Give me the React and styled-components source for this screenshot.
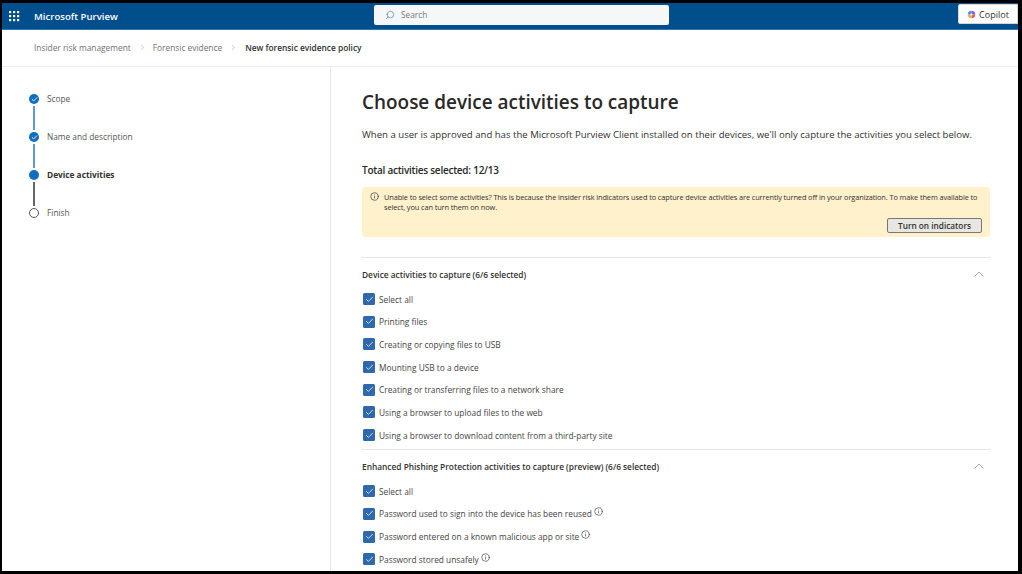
import React from "react";
import styled, { createGlobalStyle } from "styled-components";
import { Check, ChevronRight, ChevronUp, Info, Search } from "lucide-react";

const GlobalStyle = createGlobalStyle`
  html, body { margin: 0; padding: 0; height: 100%; background: #000; overflow: hidden; }
  body { font-family: "Open Sans", "Noto Sans", "Liberation Sans", sans-serif; color: #323130; }
  * { box-sizing: border-box; }
`;

const Frame = styled.div`
  width: 1022px;
  height: 574px;
  padding: 3px 4px 3px 2px;
  background: #000;
`;

const Screen = styled.div`
  height: 100%;
  background: #fff;
  display: flex;
  flex-direction: column;
  overflow: hidden;
`;

const TopBar = styled.header`
  height: 27px;
  flex: none;
  background: #004e8c;
  border-bottom: 1px solid #2f77b0;
  display: grid;
  grid-template-columns: 372px 295px 1fr;
  align-items: center;
`;

const Brand = styled.div`
  display: flex;
  align-items: center;
  gap: 14px;
  padding-left: 7px;
  color: #fff;
  font-size: 9.6px;
  font-weight: 600;
`;

const Waffle = styled.svg`
  width: 11px;
  height: 11px;
  fill: #fff;
`;

const SearchBox = styled.div`
  height: 20px;
  margin-top: -2px;
  background: #f6f7f8;
  border-radius: 2px;
  display: flex;
  align-items: center;
  gap: 6px;
  padding: 0 0 1px 11px;
  color: #7a7a7a;
  font-size: 8.3px;
`;

const CopilotSlot = styled.div`
  display: flex;
  justify-content: flex-end;
  height: 100%;
`;

const CopilotButton = styled.div`
  width: 60px;
  height: 20px;
  margin-top: 1px;
  background: #fff;
  border-radius: 2px 0 0 2px;
  border: 1px solid #d6d6d6;
  display: flex;
  align-items: center;
  justify-content: center;
  gap: 3px;
  font-size: 9px;
  color: #323130;
`;

const Crumbs = styled.nav`
  height: 37px;
  flex: none;
  border-bottom: 1px solid #ececec;
  display: flex;
  align-items: center;
  padding: 0 0 2px 32px;
  font-size: 8.35px;
  color: #707070;
`;

const CrumbSep = styled(ChevronRight)`
  width: 9px;
  height: 9px;
  margin: 0 6px 0 7px;
  color: #9a9a9a;
`;

const CrumbCurrent = styled.span`
  color: #323130;
  font-weight: 600;
  margin-left: 1px;
`;

const Body = styled.div`
  flex: 1;
  min-height: 0;
  display: grid;
  grid-template-columns: 329px 1fr;
`;

const Sidebar = styled.aside`
  border-right: 1px solid #e6e6e6;
  padding: 27px 0 0 27px;
`;

const Step = styled.div`
  position: relative;
  height: 38px;
  display: flex;
  align-items: flex-start;
  gap: 8px;
  font-size: 8.3px;
  line-height: 10px;
  font-weight: ${(p) => (p.$active ? 700 : 400)};
  color: ${(p) => (p.$active ? "#323130" : "#555")};
`;

const StepDot = styled.span`
  position: relative;
  flex: none;
  width: 10px;
  height: 10px;
  border-radius: 50%;
  background: ${(p) => (p.$empty ? "#fff" : "#106ebe")};
  border: ${(p) => (p.$empty ? "1.5px solid #555" : "none")};
  display: flex;
  align-items: center;
  justify-content: center;
  color: #fff;
`;

const StepLine = styled.span`
  position: absolute;
  left: 4px;
  top: 12px;
  width: 1.5px;
  height: 24px;
  background: ${(p) => p.$color};
`;

const Main = styled.main`
  padding: 22px 28px 0 31px;
  overflow: hidden;
  min-height: 0;
`;

const Title = styled.h1`
  margin: 0;
  font-size: 18.95px;
  line-height: 26px;
  font-weight: 600;
  color: #292827;
`;

const Lead = styled.p`
  margin: 13px 0 0;
  font-size: 9.58px;
  line-height: 14px;
  color: #323130;
`;

const Total = styled.h2`
  margin: 20px 0 0;
  font-size: 10px;
  letter-spacing: -0.25px;
  line-height: 16px;
  font-weight: 600;
  color: #292827;
`;

const Notice = styled.div`
  margin-top: 9px;
  height: 50px;
  background: #fff1cc;
  border-radius: 2px;
  padding: 5px 8px 0 8px;
  display: grid;
  grid-template-columns: 14px 1fr;
  column-gap: 0;
  font-size: 7.4px;
  letter-spacing: -0.11px;
  line-height: 10px;
`;

const NoticeIcon = styled(Info)`
  width: 9px;
  height: 9px;
  margin-top: 0;
  color: #444;
`;

const NoticeAction = styled.div`
  grid-column: 2;
  display: flex;
  justify-content: flex-end;
  margin-top: 2px;
`;

const NoticeButton = styled.button`
  width: 95px;
  height: 15px;
  padding: 0;
  background: #e8e6e1;
  border: 1px solid #777;
  border-radius: 2px;
  font: 600 8.25px "Open Sans", sans-serif;
  color: #323130;
`;

const Group = styled.section`
  border-top: 1px solid #e6e6e6;
  margin-top: ${(p) => p.$gap}px;
`;

const GroupHead = styled.div`
  height: 32px;
  display: flex;
  align-items: center;
  justify-content: space-between;
  padding-right: 3px;
  font-size: 8.33px;
  font-weight: 600;
  color: #323130;
`;

const Toggle = styled(ChevronUp)`
  width: 16px;
  height: 16px;
  color: #777;
  stroke-width: 1;
`;

const Options = styled.div`
  display: flex;
  flex-direction: column;
  gap: 10.7px;
  padding: 3px 0 0 1px;
`;

const Option = styled.label`
  height: 12px;
  display: flex;
  align-items: center;
  gap: 4px;
  font-size: 8.35px;
  color: #444;
`;

const Box = styled.span`
  flex: none;
  width: 12px;
  height: 12px;
  border-radius: 1.5px;
  background: #2f69ac;
  display: flex;
  align-items: center;
  justify-content: center;
  color: #fff;
`;

const HintIcon = styled(Info)`
  width: 9px;
  height: 9px;
  margin: -4px 0 0 -2px;
  color: #555;
`;

const CopilotLogo = () => (
  <svg width="9" height="9" viewBox="0 0 12 12">
    <path d="M6 1 A5 5 0 0 0 1 6 L4.5 6 A1.5 1.5 0 0 1 6 4.5Z" fill="#3f9be8" />
    <path d="M6 1 A5 5 0 0 1 11 6 L7.5 6 A1.5 1.5 0 0 0 6 4.5Z" fill="#8c5bd6" />
    <path d="M11 6 A5 5 0 0 1 6 11 L6 7.5 A1.5 1.5 0 0 0 7.5 6Z" fill="#ef5a6a" />
    <path d="M6 11 A5 5 0 0 1 1 6 L4.5 6 A1.5 1.5 0 0 0 6 7.5Z" fill="#f2b13a" />
  </svg>
);

const steps = [
  { label: "Scope", done: true, line: "#5b9bd5" },
  { label: "Name and description", done: true, line: "#5b9bd5" },
  { label: "Device activities", active: true, line: "#666" },
  { label: "Finish", empty: true },
];

const deviceOptions = [
  "Select all",
  "Printing files",
  "Creating or copying files to USB",
  "Mounting USB to a device",
  "Creating or transferring files to a network share",
  "Using a browser to upload files to the web",
  "Using a browser to download content from a third-party site",
];

const phishingOptions = [
  { label: "Select all" },
  { label: "Password used to sign into the device has been reused", hint: true },
  { label: "Password entered on a known malicious app or site", hint: true },
  { label: "Password stored unsafely", hint: true },
];

function CheckRow({ label, hint }) {
  return (
    <Option>
      <Box>
        <Check size={9} strokeWidth={2} />
      </Box>
      {label}
      {hint && <HintIcon />}
    </Option>
  );
}

export default function App() {
  return (
    <>
      <GlobalStyle />
      <Frame>
        <Screen>
          <TopBar>
            <Brand>
              <Waffle viewBox="0 0 11 11">
                {[0, 4, 8].flatMap((y) =>
                  [0, 4, 8].map((x) => <rect key={`${x}-${y}`} x={x} y={y} width="2.2" height="2.2" />)
                )}
              </Waffle>
              Microsoft Purview
            </Brand>
            <SearchBox>
              <Search size={10} strokeWidth={1.4} color="#2f6fb0" style={{ transform: "scaleX(-1)" }} />
              Search
            </SearchBox>
            <CopilotSlot>
              <CopilotButton>
                <CopilotLogo />
                Copilot
              </CopilotButton>
            </CopilotSlot>
          </TopBar>

          <Crumbs>
            Insider risk management
            <CrumbSep strokeWidth={1.3} />
            Forensic evidence
            <CrumbSep strokeWidth={1.3} />
            <CrumbCurrent>New forensic evidence policy</CrumbCurrent>
          </Crumbs>

          <Body>
            <Sidebar>
              {steps.map((s) => (
                <Step key={s.label} $active={s.active}>
                  <StepDot $empty={s.empty}>{s.done && <Check size={7} strokeWidth={3} />}</StepDot>
                  {s.line && <StepLine $color={s.line} />}
                  {s.label}
                </Step>
              ))}
            </Sidebar>

            <Main>
              <Title>Choose device activities to capture</Title>
              <Lead>
                When a user is approved and has the Microsoft Purview Client installed on their devices, we'll only
                capture the activities you select below.
              </Lead>
              <Total>Total activities selected: 12/13</Total>
              <Notice>
                <NoticeIcon />
                <span>
                  Unable to select some activities? This is because the insider risk indicators used to capture device
                  activities are currently turned off in your organization. To make them available to select, you can
                  turn them on now.
                </span>
                <NoticeAction>
                  <NoticeButton>Turn on indicators</NoticeButton>
                </NoticeAction>
              </Notice>

              <Group $gap={20}>
                <GroupHead>
                  Device activities to capture (6/6 selected)
                  <Toggle />
                </GroupHead>
                <Options>
                  {deviceOptions.map((label, i) => (
                    <CheckRow key={i} label={label} />
                  ))}
                </Options>
              </Group>

              <Group $gap={8}>
                <GroupHead>
                  Enhanced Phishing Protection activities to capture (preview) (6/6 selected)
                  <Toggle />
                </GroupHead>
                <Options>
                  {phishingOptions.map((o, i) => (
                    <CheckRow key={i} label={o.label} hint={o.hint} />
                  ))}
                </Options>
              </Group>
            </Main>
          </Body>
        </Screen>
      </Frame>
    </>
  );
}
